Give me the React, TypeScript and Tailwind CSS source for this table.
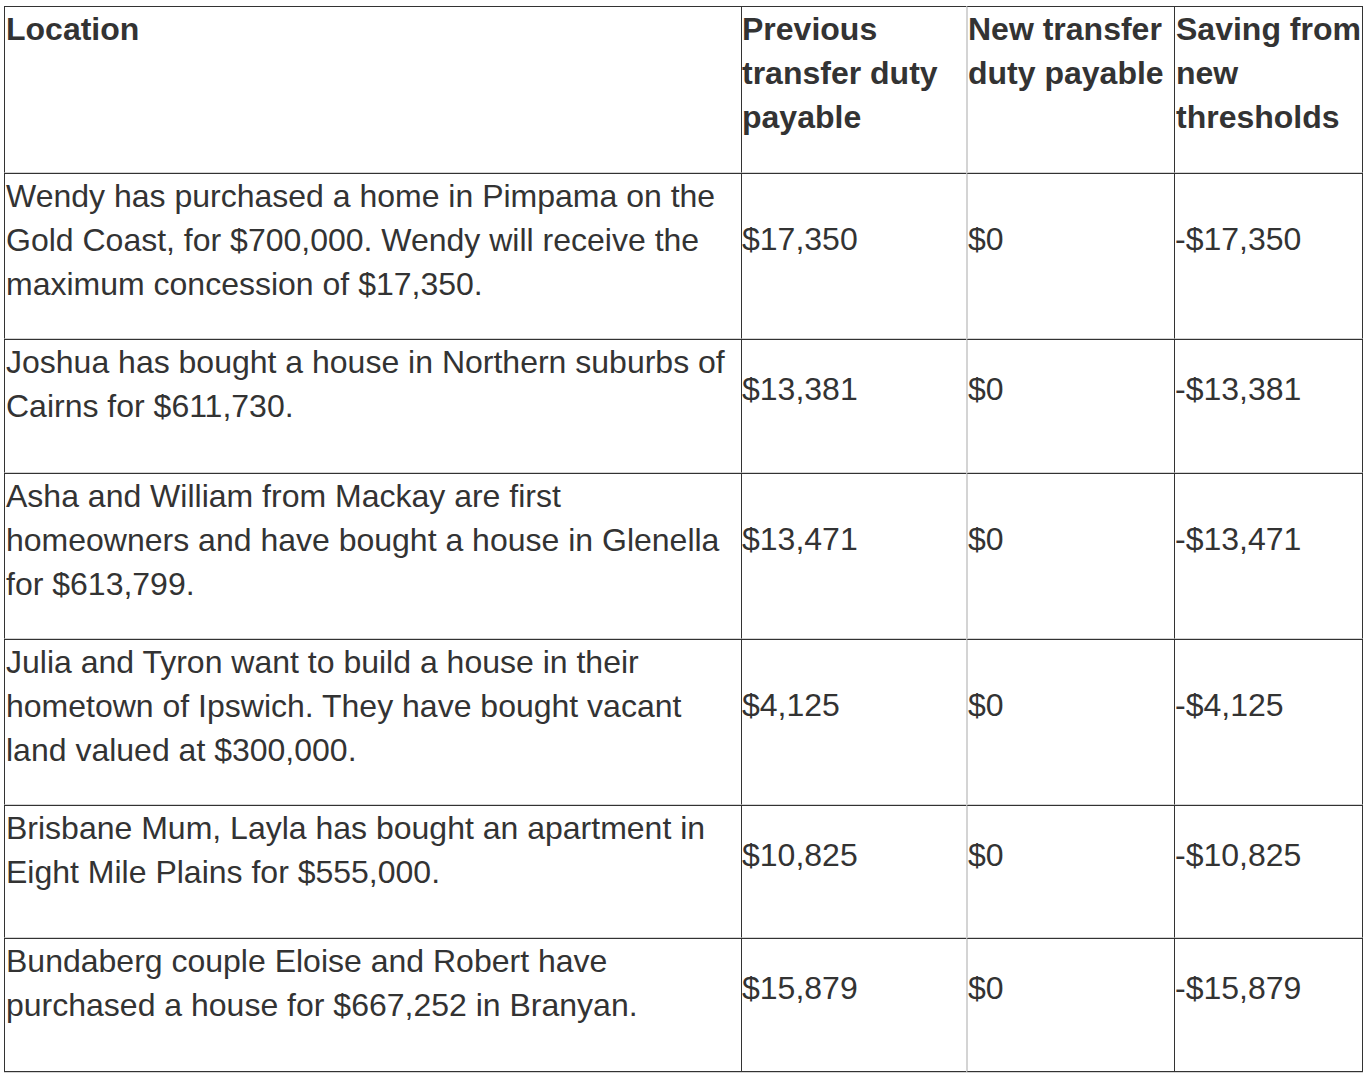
import React from "react";

type Row = { loc: string; prev: string; neu: string; save: string };

const rows: Row[] = [
  {
    loc: "Wendy has purchased a home in Pimpama on the Gold Coast, for $700,000. Wendy will receive the maximum concession of $17,350.",
    prev: "$17,350",
    neu: "$0",
    save: "-$17,350",
  },
  {
    loc: "Joshua has bought a house in Northern suburbs of Cairns for $611,730.",
    prev: "$13,381",
    neu: "$0",
    save: "-$13,381",
  },
  {
    loc: "Asha and William from Mackay are first homeowners and have bought a house in Glenella for $613,799.",
    prev: "$13,471",
    neu: "$0",
    save: "-$13,471",
  },
  {
    loc: "Julia and Tyron want to build a house in their hometown of Ipswich. They have bought vacant land valued at $300,000.",
    prev: "$4,125",
    neu: "$0",
    save: "-$4,125",
  },
  {
    loc: "Brisbane Mum, Layla has bought an apartment in Eight Mile Plains for $555,000.",
    prev: "$10,825",
    neu: "$0",
    save: "-$10,825",
  },
  {
    loc: "Bundaberg couple Eloise and Robert have purchased a house for $667,252 in Branyan.",
    prev: "$15,879",
    neu: "$0",
    save: "-$15,879",
  },
];

export default function App() {
  return (
    <div className="min-h-[1078px] w-[1370px] bg-white font-['Liberation_Sans',Arial,Helvetica,sans-serif] text-[32px] leading-[44px] text-[#333333]">
      <div className="ml-[4px] pt-[6px]">
        <div className="grid w-[1359px] grid-cols-[737px_225px_208px_189px] grid-rows-[167px_166px_134px_166px_166px_133px_134px] shadow-[0_1px_0_#d4d4d4]">
          {/* header */}
          <div className="border-l border-t border-b border-l-[#333333] border-t-[#333333] border-b-[#d4d4d4] pl-[1px] font-bold">
            Location
          </div>
          <div className="border-l border-t border-b border-l-[#333333] border-t-[#333333] border-b-[#d4d4d4] pl-0 font-bold">
            Previous transfer duty payable
          </div>
          <div className="border-l-2 border-t border-b border-l-[#d4d4d4] border-t-[#333333] border-b-[#d4d4d4] pl-0 font-bold">
            New transfer duty payable
          </div>
          <div className="border-l border-r border-t border-b border-l-[#333333] border-r-[#333333] border-t-[#333333] border-b-[#d4d4d4] pl-[1px] font-bold">
            Saving from new thresholds
          </div>
          {rows.map((r, i) => {
            const last = i === rows.length - 1;
            return (
              <React.Fragment key={i}>
                <div
                  className={
                    last
                      ? "border-l border-t border-b border-l-[#333333] border-t-[#333333] border-b-[#333333] pl-[1px]"
                      : "border-l border-t border-b border-l-[#333333] border-t-[#333333] border-b-[#d4d4d4] pl-[1px]"
                  }
                >
                  {r.loc}
                </div>
                <div
                  className={
                    last
                      ? "flex items-center border-l border-t border-b border-l-[#333333] border-t-[#333333] border-b-[#333333] pl-0 pb-[34px]"
                      : "flex items-center border-l border-t border-b border-l-[#333333] border-t-[#333333] border-b-[#d4d4d4] pl-0 pb-[34px]"
                  }
                >
                  {r.prev}
                </div>
                <div
                  className={
                    last
                      ? "flex items-center border-l-2 border-t border-b border-l-[#d4d4d4] border-t-[#333333] border-b-[#333333] pl-0 pb-[34px]"
                      : "flex items-center border-l-2 border-t border-b border-l-[#d4d4d4] border-t-[#333333] border-b-[#d4d4d4] pl-0 pb-[34px]"
                  }
                >
                  {r.neu}
                </div>
                <div
                  className={
                    last
                      ? "flex items-center border-l border-r border-t border-b border-l-[#333333] border-r-[#333333] border-t-[#333333] border-b-[#333333] pl-0 pb-[34px]"
                      : "flex items-center border-l border-r border-t border-b border-l-[#333333] border-r-[#333333] border-t-[#333333] border-b-[#d4d4d4] pl-0 pb-[34px]"
                  }
                >
                  {r.save}
                </div>
              </React.Fragment>
            );
          })}
        </div>
      </div>
    </div>
  );
}
